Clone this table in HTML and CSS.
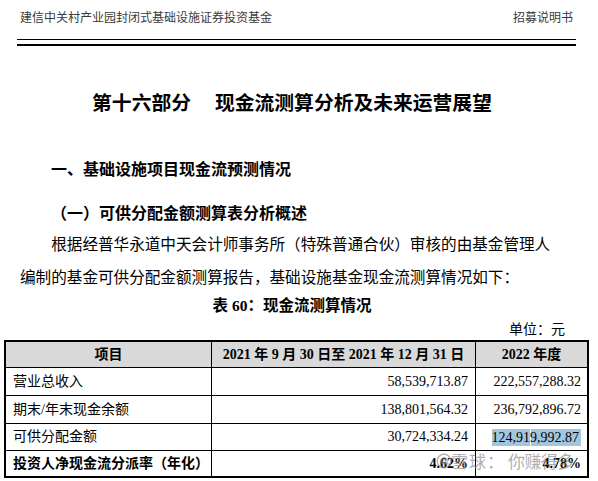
FILE: index.html
```html
<!DOCTYPE html>
<html lang="zh-CN">
<head>
<meta charset="utf-8">
<title>招募说明书</title>
<link rel="stylesheet" href="styles.css">
</head>
<body>
<div class="page">
  <header class="doc-head">
    <span>建信中关村产业园封闭式基础设施证券投资基金</span>
    <span>招募说明书</span>
  </header>
  <div class="rule"></div>
  <h1 class="title">第十六部分<span class="gap"></span>现金流测算分析及未来运营展望</h1>
  <h2 class="h2">一、基础设施项目现金流预测情况</h2>
  <h3 class="h3">（一）可供分配金额测算表分析概述</h3>
  <p class="para">根据经普华永道中天会计师事务所（特殊普通合伙）审核的由基金管理人<br>编制的基金可供分配金额测算报告，基础设施基金现金流测算情况如下：</p>
  <p class="caption">表 60：现金流测算情况</p>
  <p class="unit">单位：元</p>
</div>

<div class="table">
  <div class="cell head">项目</div>
  <div class="cell head">2021 年 9 月 30 日至 2021 年 12 月 31 日</div>
  <div class="cell head">2022 年度</div>

  <div class="cell label">营业总收入</div>
  <div class="cell num">58,539,713.87</div>
  <div class="cell num">222,557,288.32</div>

  <div class="cell label">期末/年末现金余额</div>
  <div class="cell num">138,801,564.32</div>
  <div class="cell num">236,792,896.72</div>

  <div class="cell label">可供分配金额</div>
  <div class="cell num">30,724,334.24</div>
  <div class="cell num"><span class="sel">124,91</span><span class="sel sel-b">9,992.87</span></div>

  <div class="cell label strong">投资人净现金流分派率（年化）</div>
  <div class="cell num strong">4.62%</div>
  <div class="cell num strong">4.78%</div>
</div>

<div class="watermark">
  <svg class="wm-logo" width="16" height="16" viewBox="0 0 16 16" aria-hidden="true">
    <circle cx="8" cy="8" r="6.8" fill="none" stroke="currentColor" stroke-width="1.3"/>
    <path d="M10.8 9.6 A3.2 3.2 0 1 1 11 6.4 L11 9.8 Q11 11.4 12.6 10.6" fill="none" stroke="currentColor" stroke-width="1.2"/>
    <circle cx="8.2" cy="8" r="1.6" fill="none" stroke="currentColor" stroke-width="1.1"/>
  </svg>
  <span class="wm-a">雪球</span><span class="wm-colon">：</span><span class="wm-b">你赚得多</span>
</div>
</body>
</html>
```

FILE: styles.css
```css
html, body {
  margin: 0;
  padding: 0;
  background: #fff;
}

body {
  font-family: "Liberation Serif", "Noto Sans CJK SC", serif;
  color: #000;
  position: relative;
  width: 598px;
  height: 481px;
  overflow: hidden;
}

.page {
  margin: 0 22px 0 17px;
}

.doc-head {
  display: flex;
  justify-content: space-between;
  padding: 9px 3px 0 3px;
  font-family: "Noto Sans CJK SC", sans-serif;
  font-size: 12px;
  line-height: 16px;
  color: #3a3a3a;
}

.rule {
  margin-top: 14px;
  height: 4px;
  border-top: 1px solid #000;
  border-bottom: 2px solid #000;
}

.title {
  margin: 44px 0 0 0;
  padding-right: 9px;
  text-align: center;
  font-family: "Noto Sans CJK SC", sans-serif;
  font-weight: 700;
  font-size: 19.8px;
  line-height: 24px;
}

.gap {
  display: inline-block;
  width: 24px;
}

.h2,
.h3 {
  margin: 0;
  padding-left: 34px;
  font-family: "Noto Sans CJK SC", sans-serif;
  font-weight: 700;
  font-size: 16px;
  line-height: 20px;
}

.h2 {
  margin-top: 44px;
}

.h3 {
  margin-top: 24px;
}

.para {
  margin: 4.5px 0 0 0;
  padding-left: 3px;
  text-indent: 2em;
  font-family: "Noto Sans CJK SC", sans-serif;
  font-size: 15.6px;
  line-height: 33px;
}

.caption {
  margin: 3px 0 0 0;
  padding-right: 9px;
  text-align: center;
  font-weight: 700;
  font-size: 15.5px;
  line-height: 20px;
}

.unit {
  margin: 5.5px 0 0 0;
  padding-right: 11px;
  text-align: right;
  font-size: 14px;
  line-height: 18px;
}

.table {
  margin: 1px 0 0 4px;
  width: fit-content;
  display: grid;
  grid-template-columns: 205px 263px 111px;
  grid-template-rows: 25px 27px 27px 26px 25px;
  gap: 1px;
  background: #000;
  border: 2px solid #000;
}

.cell {
  background: #fff;
  display: flex;
  align-items: center;
  padding: 0 7px;
  font-size: 14px;
  line-height: 18px;
  white-space: nowrap;
}

.head {
  background: #d9d9d9;
  justify-content: center;
  font-weight: 700;
}

.label {
  justify-content: flex-start;
}

.num {
  justify-content: flex-end;
}

.num:nth-child(3n) {
  padding-right: 6px;
}

.strong {
  font-weight: 700;
}

.sel {
  display: inline-block;
  background: #a3c6df;
  line-height: 17px;
}

.sel-b {
  box-shadow: inset 1px 0 0 #f2f7fb;
  padding-right: 2px;
}

.watermark {
  position: absolute;
  left: 436px;
  top: 451px;
  display: flex;
  align-items: center;
  color: rgba(140, 140, 140, 0.7);
  font-family: "Noto Sans CJK SC", sans-serif;
  font-size: 17px;
  line-height: 20px;
  pointer-events: none;
}

.wm-logo {
  margin-right: -1px;
}

.wm-a {
  letter-spacing: 1px;
}

.wm-b {
  margin-left: 4px;
  letter-spacing: -0.5px;
}
```
